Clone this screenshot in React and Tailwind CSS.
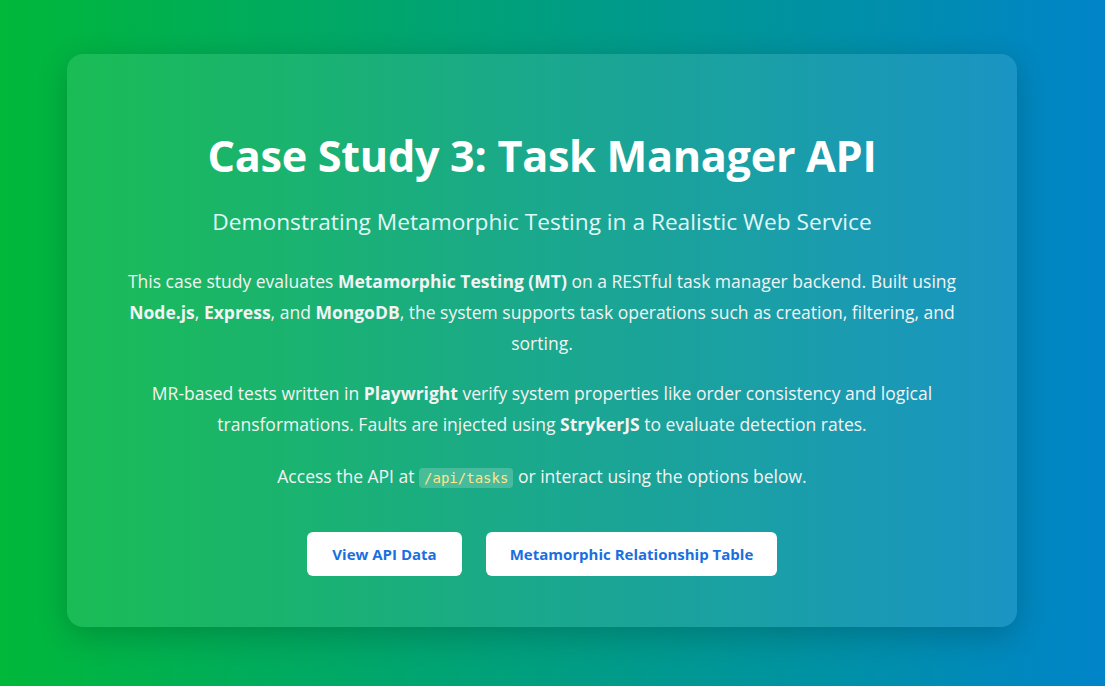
export default function App() {
  const font = { fontFamily: '"Open Sans", "Noto Sans", sans-serif' };
  return (
    <div className="min-h-[686px] w-full bg-[linear-gradient(90deg,#00b83a_0%,#0084c9_100%)] pt-[54px] pb-[59px]" style={font}>
      <div className="ml-[67px] w-[950px] rounded-2xl bg-white/10 shadow-[0_8px_32px_rgba(0,0,0,0.2)] px-[60px] pt-[75px] pb-[51px] text-center text-white">
        <h1 className="text-[43.2px] font-bold leading-[54px] tracking-[-0.3px]">Case Study 3: Task Manager API</h1>
        <p className="mt-[24px] text-[22.7px] leading-[30px] text-[#e0f7fa]">Demonstrating Metamorphic Testing in a Realistic Web Service</p>
        <p className="mt-[29px] text-[17.5px] leading-[31px] text-[#f3f3f3]">
          This case study evaluates <strong>Metamorphic Testing (MT)</strong> on a RESTful task manager backend. Built using <strong>Node.js</strong>, <strong>Express</strong>, and <strong>MongoDB</strong>, the system supports task operations such as creation, filtering, and sorting.
        </p>
        <p className="mt-[19px] text-[17.5px] leading-[31px] text-[#f3f3f3]">
          MR-based tests written in <strong>Playwright</strong> verify system properties like order consistency and logical transformations. Faults are injected using <strong>StrykerJS</strong> to evaluate detection rates.
        </p>
        <p className="mt-[21px] text-[17.5px] leading-[31px] text-[#f3f3f3]">
          Access the API at{" "}
          <code className="rounded-[4px] bg-white/20 px-[5px] py-[2px] text-[14px] text-[#ffe58a]" style={{ fontFamily: '"DejaVu Sans Mono", monospace' }}>/api/tasks</code>{" "}
          or interact using the options below.
        </p>
        <div className="mt-[38px] flex justify-center gap-[24px]">
          <button className="h-[44px] w-[155px] rounded-[6px] bg-white text-[15px] font-bold text-[#1a6fe0]">View API Data</button>
          <button className="h-[44px] w-[291px] rounded-[6px] bg-white text-[15px] font-bold text-[#1a6fe0]">Metamorphic Relationship Table</button>
        </div>
      </div>
    </div>
  );
}
